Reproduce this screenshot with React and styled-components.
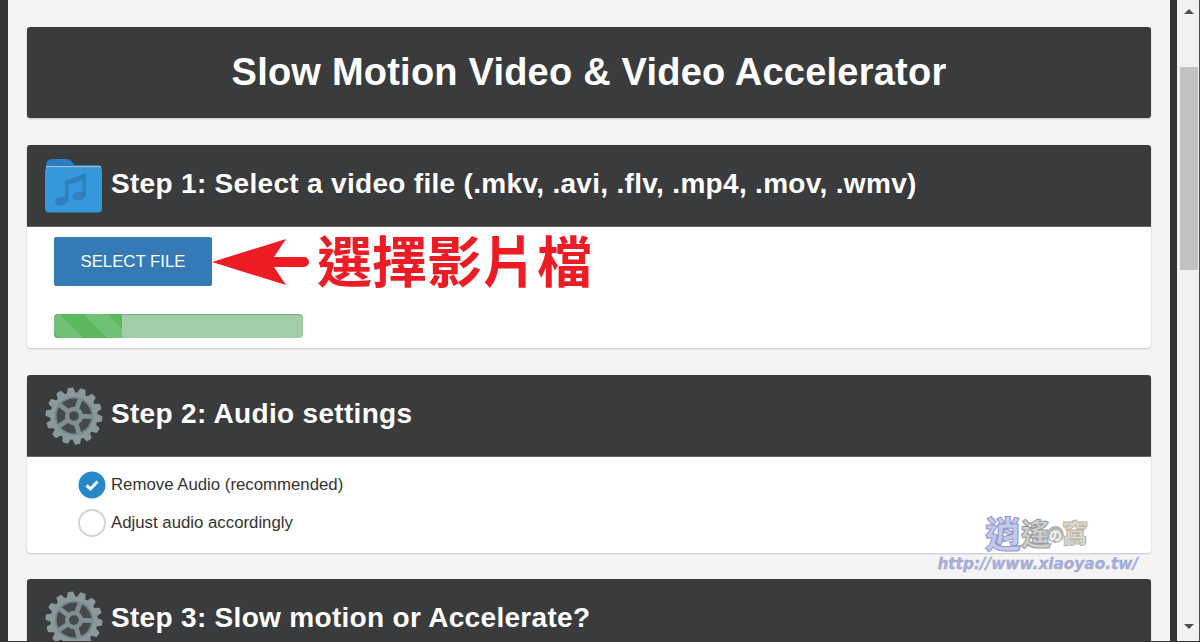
import React from 'react';
import styled, { createGlobalStyle } from 'styled-components';

const GlobalStyle = createGlobalStyle`
    html, body {
        margin: 0;
        padding: 0;
        height: 100%;
        overflow: hidden;
        background: #f4f4f4;
    }
    body {
        font-family: "Liberation Sans", Arial, sans-serif;
    }
`;

const gearTeeth = (() => {
    const teeth = 14;
    const outer = 28.500;
    const inner = 23.5;
    let d = '';
    for (let i = 0; i < teeth; i++) {
        const step = (Math.PI * 2) / teeth;
        const a = i * step + 0.1;
        const pts = [
            [inner, a - step * 0.34],
            [outer, a - step * 0.16],
            [outer, a + step * 0.16],
            [inner, a + step * 0.34],
        ];
        pts.forEach(([r, t], n) => {
            const x = (30 + r * Math.cos(t)).toFixed(2);
            const y = (30 + r * Math.sin(t)).toFixed(2);
            d += `${i === 0 && n === 0 ? 'M' : 'L'}${x} ${y} `;
        });
    }
    return d + 'Z';
})();

const GearIcon = () => (
    <IconSvg viewBox="0 0 60 60" width="58" height="58">
        <path d={gearTeeth} fill="#8a999b" strokeLinejoin="round" stroke="#8a999b" strokeWidth="2" />
        <circle cx="30" cy="30" r="20" fill="#76868a" />
        <circle cx="30" cy="30" r="18" fill="#45494b" />
        <circle cx="30" cy="30" r="9.500" fill="#7f8f92" />
        {[20, 92, 164, 236, 308].map(a => (
            <rect key={a} x="27.500" y="11" width="5" height="14" fill="#7f8f92" transform={`rotate(${a} 30 30)`} />
        ))}
        <circle cx="30" cy="30" r="5" fill="#45494b" />
    </IconSvg>
);

const FolderIcon = () => (
    <IconSvg viewBox="0 0 58 55" width="58" height="55">
        <path d="M1 8c0-4 2-7 6-7h15c2 0 3 1 5 3l3 3h22c3 0 5 2 5 5v8H1z" fill="#2a7cc4" />
        <rect x="1" y="8" width="55" height="1.500" fill="#a9b9c9" />
        <rect x="0" y="9.500" width="57" height="45" rx="4" fill="#3498db" />
        <g fill="#2f80bd">
            <path d="M20 23l21-8v6l-21 7z" />
            <rect x="20" y="23" width="3.500" height="20" />
            <rect x="37.500" y="16" width="3.500" height="22" />
            <ellipse cx="16.500" cy="43" rx="6.500" ry="4.200" transform="rotate(-15 16.500 43)" />
            <ellipse cx="34" cy="38" rx="6.500" ry="4.200" transform="rotate(-15 34 38)" />
        </g>
    </IconSvg>
);

const ArrowIcon = () => (
    <svg viewBox="0 0 97 46" width="97" height="46">
        <path d="M0 23L74 0 62 18H92a5 5 0 0 1 0 10H62l12 18z" fill="#ed1c24" />
    </svg>
);

const CheckMark = () => (
    <svg viewBox="0 0 28 28" width="28" height="28">
        <circle cx="14" cy="14" r="13.500" fill="#2589c9" />
        <path d="M8.500 14.500l4 3.500 7-7.500" fill="none" stroke="#fff" strokeWidth="3" />
    </svg>
);

export default function App() {
    return (
        <Page>
            <GlobalStyle />
            <Strip $width={8} />
            <Main>
                <TitleBar>Slow Motion Video &amp; Video Accelerator</TitleBar>

                <Card>
                    <CardHeader>
                        <FolderIcon />
                        <StepTitle>Step 1: Select a video file (.mkv, .avi, .flv, .mp4, .mov, .wmv)</StepTitle>
                    </CardHeader>
                    <FileBody>
                        <FileRow>
                            <SelectButton>SELECT FILE</SelectButton>
                            <ArrowIcon />
                            <Annotation>選擇影片檔</Annotation>
                        </FileRow>
                        <Progress>
                            <ProgressFill style={{ width: '27.3%' }} />
                        </Progress>
                    </FileBody>
                </Card>

                <Card $tight>
                    <CardHeader>
                        <GearIcon />
                        <StepTitle>Step 2: Audio settings</StepTitle>
                    </CardHeader>
                    <AudioBody>
                        <Option>
                            <CheckMark />
                            <span>Remove Audio (recommended)</span>
                        </Option>
                        <Option>
                            <EmptyRadio />
                            <span>Adjust audio accordingly</span>
                        </Option>
                        <Watermark>
                            <WatermarkName>
                                <WatermarkChar $size={36} $color="#c3c9e8" $edge="#8f99cc">逍</WatermarkChar>
                                <WatermarkChar $size={30} $color="#cfcfcf" $edge="#9a9a9a">遙</WatermarkChar>
                                <WatermarkNo>の</WatermarkNo>
                                <WatermarkChar $size={26} $color="#dcd8cc" $edge="#b9b4a6">窩</WatermarkChar>
                            </WatermarkName>
                            <WatermarkUrl>http://www.xiaoyao.tw/</WatermarkUrl>
                        </Watermark>
                    </AudioBody>
                </Card>

                <Card>
                    <CardHeader>
                        <GearIcon />
                        <StepTitle>Step 3: Slow motion or Accelerate?</StepTitle>
                    </CardHeader>
                </Card>
            </Main>
            <Strip $width={7} />
            <Scrollbar>
                <ScrollArrow />
                <ScrollThumb />
                <ScrollArrow $down />
            </Scrollbar>
            <BottomLine />
        </Page>
    );
}

const Page = styled.div`
    display: flex;
    position: relative;
    width: 1200px;
    height: 642px;
    overflow: hidden;
    background: #f4f4f4;
`;

const Strip = styled.div`
    flex: 0 0 ${props => props.$width}px;
    background: #333435;
`;

const Main = styled.div`
    flex: 1;
    display: flex;
    flex-direction: column;
    gap: 27px;
    padding: 27px 19px 0;
    min-width: 0;
`;

const TitleBar = styled.h1`
    flex: none;
    margin: 0;
    height: 91px;
    line-height: 91px;
    border-radius: 3px;
    background: #3a3b3d;
    color: #fff;
    font-size: 38px;
    font-weight: 700;
    letter-spacing: 0.22px;
    text-align: center;
    box-shadow: 0 1px 2px rgba(0, 0, 0, 0.2);
`;

const Card = styled.section`
    flex: none;
    margin-bottom: ${props => (props.$tight ? '-1px' : '0')};
    border-radius: 4px;
    background: #fff;
    box-shadow: 0 1px 2px rgba(0, 0, 0, 0.2);
`;

const CardHeader = styled.header`
    display: flex;
    align-items: center;
    gap: 8px;
    height: 82px;
    padding: 0 18px 1px;
    border-radius: 3px 3px 0 0;
    background: #3a3b3d;
    box-sizing: border-box;
    border-bottom: 1px solid #666;
`;

const IconSvg = styled.svg`
    flex: none;
    display: block;
    margin-top: 1px;
`;

const StepTitle = styled.h2`
    margin: 0 0 3px;
    color: #fff;
    font-size: 28px;
    font-weight: 700;
    letter-spacing: 0.31px;
    white-space: nowrap;
`;

const FileBody = styled.div`
    height: 121px;
    padding: 10px 27px 0;
    box-sizing: border-box;
`;

const FileRow = styled.div`
    display: flex;
    align-items: center;
    height: 49px;
`;

const SelectButton = styled.button`
    flex: none;
    width: 158px;
    height: 49px;
    padding: 0;
    border: 0;
    border-radius: 2px;
    background: #337ab7;
    color: #fff;
    font-family: "Liberation Sans", Arial, sans-serif;
    font-size: 16.800px;
`;

const Annotation = styled.span`
    margin: -6px 0 0 8px;
    color: #ed1c24;
    font-family: "Noto Sans CJK TC", sans-serif;
    font-size: 55px;
    font-weight: 700;
    line-height: 49px;
    white-space: nowrap;
`;

const Progress = styled.div`
    width: 249px;
    height: 24px;
    margin-top: 28px;
    border-radius: 4px;
    background: #a1cfaa;
    overflow: hidden;
    box-shadow: inset 0 1px 1px rgba(0, 0, 0, 0.2);
`;

const ProgressFill = styled.div`
    height: 100%;
    background: repeating-linear-gradient(45deg, #5cb85c 0 4px, #70c175 4px 21px, #5cb85c 21px 34px);
`;

const AudioBody = styled.div`
    position: relative;
    height: 96px;
    padding: 9px 51px 0;
    box-sizing: border-box;
`;

const Option = styled.label`
    display: flex;
    align-items: center;
    gap: 5px;
    height: 38px;
    color: #333;
    font-size: 16.800px;
`;

const EmptyRadio = styled.span`
    flex: none;
    width: 24px;
    height: 24px;
    border: 2px solid #d4d4d4;
    border-radius: 50%;
    background: #fff;
`;

const Watermark = styled.div`
    position: absolute;
    right: 13px;
    top: 56px;
    display: flex;
    flex-direction: column;
    align-items: flex-end;
`;

const WatermarkName = styled.div`
    display: flex;
    align-items: center;
    margin-right: 50px;
    font-family: "Noto Sans CJK TC", sans-serif;
    font-weight: 900;
    line-height: 38px;
`;

const WatermarkChar = styled.span`
    color: ${props => props.$color};
    font-size: ${props => props.$size}px;
    -webkit-text-stroke: 1px ${props => props.$edge};
`;

const WatermarkNo = styled.span`
    width: 17px;
    height: 17px;
    margin: 5px -2px 0 -4px;
    border-radius: 50%;
    background: #b5b5b5;
    color: #eee;
    font-size: 13px;
    line-height: 17px;
    text-align: center;
`;

const WatermarkUrl = styled.div`
    color: #a6aedb;
    font-family: "DejaVu Sans", sans-serif;
    font-size: 15.300px;
    font-style: italic;
    font-weight: 700;
    line-height: 18px;
    white-space: nowrap;
    -webkit-text-stroke: 0.3px #9aa3d2;
    transform: translateY(4px);
`;

const Scrollbar = styled.div`
    flex: none;
    width: 23px;
    display: flex;
    flex-direction: column;
    align-items: center;
    box-sizing: border-box;
    padding: 9px 1px 0 3px;
    background: #f1f1f1;
    border-right: 1px solid #4d4d4f;
`;

const ScrollArrow = styled.span`
    flex: none;
    width: 0;
    height: 0;
    border-left: 5px solid transparent;
    border-right: 5px solid transparent;
    ${props => props.$down
        ? 'border-top: 5px solid #505050; margin-top: auto; margin-bottom: 13px;'
        : 'border-bottom: 5px solid #505050;'}
`;

const ScrollThumb = styled.div`
    flex: none;
    width: 100%;
    height: 203px;
    margin-top: 53px;
    background: #c1c1c1;
`;

const BottomLine = styled.div`
    position: absolute;
    left: 0;
    right: 0;
    bottom: 0;
    height: 1px;
    background: #333435;
`;
